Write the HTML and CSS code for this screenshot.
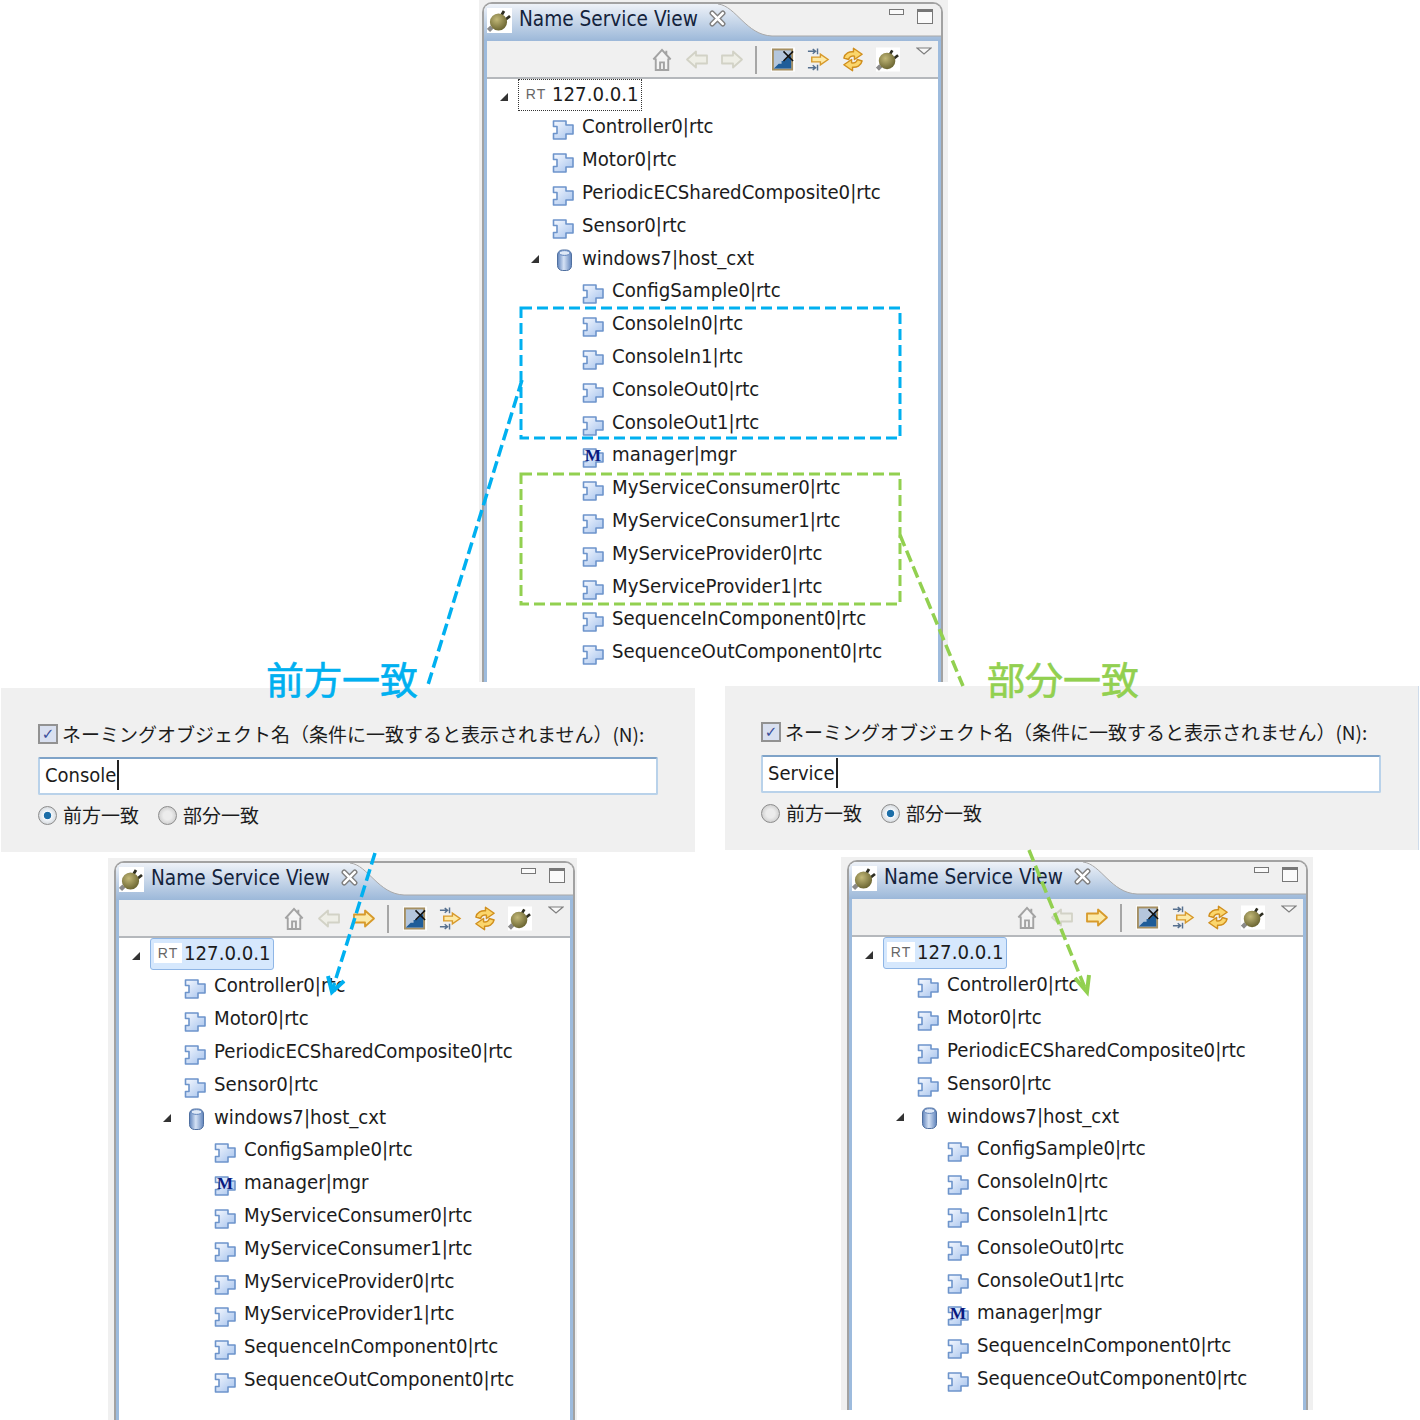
FILE: index.html
```html
<!DOCTYPE html>
<html lang="en">
  <head>
    <meta charset="UTF-8">
    <title>Name Service View</title>
    <link rel="stylesheet" href="styles.css">
  </head>
  <body>
    <!-- shared icons -->
    <svg class="defs" width="0" height="0">
      <defs>
        <linearGradient id="tabfill" x1="0" y1="0" x2="0" y2="1">
          <stop offset="0" stop-color="#eef2f8"/>
          <stop offset="1" stop-color="#9cb8d9"/>
        </linearGradient>
        <linearGradient id="puzzlefill" x1="0" y1="0" x2="1" y2="1">
          <stop offset="0" stop-color="#f6f9ff"/>
          <stop offset="1" stop-color="#a3c1ec"/>
        </linearGradient>
        <linearGradient id="dbfill" x1="0" y1="0" x2="1" y2="0">
          <stop offset="0" stop-color="#5f83bb"/>
          <stop offset=".45" stop-color="#d5e2f5"/>
          <stop offset="1" stop-color="#5f83bb"/>
        </linearGradient>
        <radialGradient id="plugfill" cx=".4" cy=".35" r=".75">
          <stop offset="0" stop-color="#c2b878"/>
          <stop offset="1" stop-color="#5f5a28"/>
        </radialGradient>
        <symbol id="puzzle" viewBox="0 0 22 21">
          <path d="M1.5 2H14V6H21V15H14V20H1.5V14.5H5V7.5H1.5Z" fill="url(#puzzlefill)" stroke="#6d94cb" stroke-width="1.6" stroke-linejoin="round"/>
        </symbol>
        <symbol id="db" viewBox="0 0 17 24">
          <rect x="1.5" y="2" width="14" height="20.5" rx="5" fill="url(#dbfill)" stroke="#4f6f9f"/>
          <ellipse cx="8.5" cy="5" rx="5.5" ry="2.4" fill="#dfe9f7" stroke="#5f83bb"/>
        </symbol>
        <symbol id="plug" viewBox="0 0 25 25">
          <rect width="25" height="25" fill="#fff"/>
          <path d="M5 19L1.5 22.5" stroke="#8a8a8a" stroke-width="4.5"/>
          <path d="M14 8L17 3M18 12L23 8" stroke="#2e2e22" stroke-width="2.8"/>
          <circle cx="11.5" cy="14" r="8.6" fill="url(#plugfill)"/>
        </symbol>
        <symbol id="home" viewBox="0 0 24 26">
          <path d="M3 13L12 3L21 13M5.5 12V24H18.5V12M10 24V16H14V24M16.5 4V8" fill="#f4f4f4" stroke="#a3a3a3" stroke-width="2"/>
        </symbol>
        <symbol id="back" viewBox="0 0 24 24">
          <path d="M2 12L11 4V8H22V16H11V20Z" fill="#eeeee6" stroke="#d2d2c6" stroke-width="1.8" stroke-linejoin="round"/>
        </symbol>
        <symbol id="fwd" viewBox="0 0 24 24">
          <path d="M22 12L13 4V8H2V16H13V20Z" fill="#eeeee6" stroke="#d2d2c6" stroke-width="1.8" stroke-linejoin="round"/>
        </symbol>
        <symbol id="fwdon" viewBox="0 0 24 24">
          <path d="M22 12L13 4V8H2V16H13V20Z" fill="#fbe9a8" stroke="#d79a2b" stroke-width="1.8" stroke-linejoin="round"/>
        </symbol>
        <symbol id="filter" viewBox="0 0 25 25">
          <rect width="25" height="25" fill="#fff"/>
          <rect x="2" y="2" width="20" height="21" fill="#b4c6dc" stroke="#a58f62" stroke-width="2"/>
          <path d="M3 22L8 17H11V14H14L20 8H21V22Z" fill="#1f5d99"/>
          <path d="M13 4L23 14M23 4L13 14" stroke="#111" stroke-width="1.6"/>
        </symbol>
        <symbol id="link" viewBox="0 0 25 25">
          <path d="M2 4H9M7 1.5L10 4L7 6.5M12 1V7M2 21H9M7 18.5L10 21L7 23.5M12 18V24" fill="none" stroke="#56708f" stroke-width="1.5"/>
          <path d="M6 10H15V7L23 12.5L15 18V15H6Z" fill="#fde9a5" stroke="#d89a2c" stroke-width="1.5"/>
        </symbol>
        <symbol id="sync" viewBox="0 0 25 25">
          <path id="synchalf" d="M3 11C4 6 9 4 13 4.5L13 0.8L22 7L14 12.5L14 9C11 8.5 8.5 10 8 12.5Z" fill="#fbd66c" stroke="#d08f1e" stroke-width="1.5" stroke-linejoin="round"/>
          <use href="#synchalf" transform="rotate(180 12.5 12.5)"/>
        </symbol>
        <symbol id="closex" viewBox="0 0 16 16">
          <path d="M3 3L13 13M13 3L3 13" stroke="#808080" stroke-width="5" stroke-linecap="round"/>
          <path d="M3 3L13 13M13 3L3 13" stroke="#fff" stroke-width="2.4" stroke-linecap="round"/>
        </symbol>
        <symbol id="menutri" viewBox="0 0 16 8">
          <path d="M1 1H15L8 7Z" fill="#f8f8f8" stroke="#7f7f7f" stroke-width="1.2"/>
        </symbol>
      </defs>
    </svg>

    <div class="view view-top">
      <div class="pane">
        <div class="tabbar">
          <svg class="tabshape" width="457" height="37"><path d="M0 37V0H234C252 2 262 31 288 32H457V37Z" fill="url(#tabfill)"/><path d="M234 0C252 2 262 31 288 32H457" fill="none" stroke="#a8a8a8"/></svg>
          <svg class="tabicon"><use href="#plug"/></svg>
          <span class="tabtitle">Name Service View</span>
          <svg class="tabclose"><use href="#closex"/></svg>
          <span class="winmin"></span>
          <span class="winmax"></span>
        </div>
        <div class="body">
          <div class="toolbar">
            <svg class="tool"><use href="#home"/></svg>
            <svg class="tool"><use href="#back"/></svg>
            <svg class="tool"><use href="#fwd"/></svg>
            <span class="sep"></span>
            <svg class="tool"><use href="#filter"/></svg>
            <svg class="tool"><use href="#link"/></svg>
            <svg class="tool"><use href="#sync"/></svg>
            <svg class="tool"><use href="#plug"/></svg>
            <svg class="menu"><use href="#menutri"/></svg>
          </div>
          <ul class="tree">
            <li class="row root"><i class="twisty"></i><span class="rootbox"><b class="rt">RT</b>127.0.0.1</span></li>
            <li class="row l1"><svg class="ico"><use href="#puzzle"/></svg>Controller0|rtc</li>
            <li class="row l1"><svg class="ico"><use href="#puzzle"/></svg>Motor0|rtc</li>
            <li class="row l1"><svg class="ico"><use href="#puzzle"/></svg>PeriodicECSharedComposite0|rtc</li>
            <li class="row l1"><svg class="ico"><use href="#puzzle"/></svg>Sensor0|rtc</li>
            <li class="row host"><i class="twisty"></i><svg class="dbico"><use href="#db"/></svg>windows7|host_cxt</li>
            <li class="row l2"><svg class="ico"><use href="#puzzle"/></svg>ConfigSample0|rtc</li>
            <li class="row l2"><svg class="ico"><use href="#puzzle"/></svg>ConsoleIn0|rtc</li>
            <li class="row l2"><svg class="ico"><use href="#puzzle"/></svg>ConsoleIn1|rtc</li>
            <li class="row l2"><svg class="ico"><use href="#puzzle"/></svg>ConsoleOut0|rtc</li>
            <li class="row l2"><svg class="ico"><use href="#puzzle"/></svg>ConsoleOut1|rtc</li>
            <li class="row l2"><span class="mgr"><svg class="ico"><use href="#puzzle"/></svg><em>M</em></span>manager|mgr</li>
            <li class="row l2"><svg class="ico"><use href="#puzzle"/></svg>MyServiceConsumer0|rtc</li>
            <li class="row l2"><svg class="ico"><use href="#puzzle"/></svg>MyServiceConsumer1|rtc</li>
            <li class="row l2"><svg class="ico"><use href="#puzzle"/></svg>MyServiceProvider0|rtc</li>
            <li class="row l2"><svg class="ico"><use href="#puzzle"/></svg>MyServiceProvider1|rtc</li>
            <li class="row l2"><svg class="ico"><use href="#puzzle"/></svg>SequenceInComponent0|rtc</li>
            <li class="row l2"><svg class="ico"><use href="#puzzle"/></svg>SequenceOutComponent0|rtc</li>
          </ul>
        </div>
      </div>
    </div>

    <div class="view view-left">
      <div class="pane">
        <div class="tabbar">
          <svg class="tabshape" width="457" height="37"><path d="M0 37V0H234C252 2 262 31 288 32H457V37Z" fill="url(#tabfill)"/><path d="M234 0C252 2 262 31 288 32H457" fill="none" stroke="#a8a8a8"/></svg>
          <svg class="tabicon"><use href="#plug"/></svg>
          <span class="tabtitle">Name Service View</span>
          <svg class="tabclose"><use href="#closex"/></svg>
          <span class="winmin"></span>
          <span class="winmax"></span>
        </div>
        <div class="body">
          <div class="toolbar">
            <svg class="tool"><use href="#home"/></svg>
            <svg class="tool"><use href="#back"/></svg>
            <svg class="tool"><use href="#fwdon"/></svg>
            <span class="sep"></span>
            <svg class="tool"><use href="#filter"/></svg>
            <svg class="tool"><use href="#link"/></svg>
            <svg class="tool"><use href="#sync"/></svg>
            <svg class="tool"><use href="#plug"/></svg>
            <svg class="menu"><use href="#menutri"/></svg>
          </div>
          <ul class="tree">
            <li class="row root"><i class="twisty"></i><span class="rootbox selected"><b class="rt">RT</b>127.0.0.1</span></li>
            <li class="row l1"><svg class="ico"><use href="#puzzle"/></svg>Controller0|rtc</li>
            <li class="row l1"><svg class="ico"><use href="#puzzle"/></svg>Motor0|rtc</li>
            <li class="row l1"><svg class="ico"><use href="#puzzle"/></svg>PeriodicECSharedComposite0|rtc</li>
            <li class="row l1"><svg class="ico"><use href="#puzzle"/></svg>Sensor0|rtc</li>
            <li class="row host"><i class="twisty"></i><svg class="dbico"><use href="#db"/></svg>windows7|host_cxt</li>
            <li class="row l2"><svg class="ico"><use href="#puzzle"/></svg>ConfigSample0|rtc</li>
            <li class="row l2"><span class="mgr"><svg class="ico"><use href="#puzzle"/></svg><em>M</em></span>manager|mgr</li>
            <li class="row l2"><svg class="ico"><use href="#puzzle"/></svg>MyServiceConsumer0|rtc</li>
            <li class="row l2"><svg class="ico"><use href="#puzzle"/></svg>MyServiceConsumer1|rtc</li>
            <li class="row l2"><svg class="ico"><use href="#puzzle"/></svg>MyServiceProvider0|rtc</li>
            <li class="row l2"><svg class="ico"><use href="#puzzle"/></svg>MyServiceProvider1|rtc</li>
            <li class="row l2"><svg class="ico"><use href="#puzzle"/></svg>SequenceInComponent0|rtc</li>
            <li class="row l2"><svg class="ico"><use href="#puzzle"/></svg>SequenceOutComponent0|rtc</li>
          </ul>
        </div>
      </div>
    </div>

    <div class="view view-right">
      <div class="pane">
        <div class="tabbar">
          <svg class="tabshape" width="457" height="37"><path d="M0 37V0H234C252 2 262 31 288 32H457V37Z" fill="url(#tabfill)"/><path d="M234 0C252 2 262 31 288 32H457" fill="none" stroke="#a8a8a8"/></svg>
          <svg class="tabicon"><use href="#plug"/></svg>
          <span class="tabtitle">Name Service View</span>
          <svg class="tabclose"><use href="#closex"/></svg>
          <span class="winmin"></span>
          <span class="winmax"></span>
        </div>
        <div class="body">
          <div class="toolbar">
            <svg class="tool"><use href="#home"/></svg>
            <svg class="tool"><use href="#back"/></svg>
            <svg class="tool"><use href="#fwdon"/></svg>
            <span class="sep"></span>
            <svg class="tool"><use href="#filter"/></svg>
            <svg class="tool"><use href="#link"/></svg>
            <svg class="tool"><use href="#sync"/></svg>
            <svg class="tool"><use href="#plug"/></svg>
            <svg class="menu"><use href="#menutri"/></svg>
          </div>
          <ul class="tree">
            <li class="row root"><i class="twisty"></i><span class="rootbox selected"><b class="rt">RT</b>127.0.0.1</span></li>
            <li class="row l1"><svg class="ico"><use href="#puzzle"/></svg>Controller0|rtc</li>
            <li class="row l1"><svg class="ico"><use href="#puzzle"/></svg>Motor0|rtc</li>
            <li class="row l1"><svg class="ico"><use href="#puzzle"/></svg>PeriodicECSharedComposite0|rtc</li>
            <li class="row l1"><svg class="ico"><use href="#puzzle"/></svg>Sensor0|rtc</li>
            <li class="row host"><i class="twisty"></i><svg class="dbico"><use href="#db"/></svg>windows7|host_cxt</li>
            <li class="row l2"><svg class="ico"><use href="#puzzle"/></svg>ConfigSample0|rtc</li>
            <li class="row l2"><svg class="ico"><use href="#puzzle"/></svg>ConsoleIn0|rtc</li>
            <li class="row l2"><svg class="ico"><use href="#puzzle"/></svg>ConsoleIn1|rtc</li>
            <li class="row l2"><svg class="ico"><use href="#puzzle"/></svg>ConsoleOut0|rtc</li>
            <li class="row l2"><svg class="ico"><use href="#puzzle"/></svg>ConsoleOut1|rtc</li>
            <li class="row l2"><span class="mgr"><svg class="ico"><use href="#puzzle"/></svg><em>M</em></span>manager|mgr</li>
            <li class="row l2"><svg class="ico"><use href="#puzzle"/></svg>SequenceInComponent0|rtc</li>
            <li class="row l2"><svg class="ico"><use href="#puzzle"/></svg>SequenceOutComponent0|rtc</li>
          </ul>
        </div>
      </div>
    </div>

    <div class="panel panel-left">
      <div class="check-line"><span class="checkbox">✓</span><span class="check-text">ネーミングオブジェクト名（条件に一致すると表示されません）(N):</span></div>
      <div class="field">Console<span class="caret"></span></div>
      <div class="radios">
        <span class="radio on"></span><span class="radio-text">前方一致</span>
        <span class="radio"></span><span class="radio-text">部分一致</span>
      </div>
    </div>

    <div class="panel panel-right">
      <div class="check-line"><span class="checkbox">✓</span><span class="check-text">ネーミングオブジェクト名（条件に一致すると表示されません）(N):</span></div>
      <div class="field">Service<span class="caret"></span></div>
      <div class="radios">
        <span class="radio"></span><span class="radio-text">前方一致</span>
        <span class="radio on"></span><span class="radio-text">部分一致</span>
      </div>
    </div>

    <svg class="marks" width="1420" height="1420">
      <rect class="blue dash" x="521" y="308" width="379" height="130"/>
      <rect class="green dash" x="521" y="474" width="379" height="130"/>
      <path class="blue line" d="M522 380L427 688"/>
      <path class="blue line" d="M375 853L333 988"/>
      <path class="blue head" d="M328 976L332 992L344 981"/>
      <path class="green line" d="M900 535L963 686"/>
      <path class="green line" d="M1029 850L1085 988"/>
      <path class="green head" d="M1075 978L1087 992L1089 975"/>
    </svg>

    <div class="caption caption-blue">前方一致</div>
    <div class="caption caption-green">部分一致</div>
  </body>
</html>
```

FILE: styles.css
```css
*{
    margin: 0;
    padding: 0;
    box-sizing: border-box;
}
body{
    position: relative;
    width: 1420px;
    height: 1420px;
    overflow: hidden;
    background: white;
    font-family: "DejaVu Sans", "Noto Sans", sans-serif;
    font-stretch: condensed;
    color: #1c1c1c;
}
.defs{
    position: absolute;
}

/* views sit freely on the picture */
.view{
    position: absolute;
    display: flex;
    background: #f0f0f0;
    padding-top: 2px;
}
.view-top{
    left: 479px;
    top: 0;
    width: 469px;
    height: 682px;
    padding-left: 3px;
}
.view-left{
    left: 108px;
    top: 858px;
    width: 469px;
    height: 562px;
    padding-left: 6px;
    padding-top: 3px;
}
.view-right{
    left: 841px;
    top: 857px;
    width: 472px;
    height: 553px;
    padding-left: 6px;
    padding-top: 3px;
}
.pane{
    width: 461px;
    height: 100%;
    display: flex;
    flex-direction: column;
    border: 2px solid #a2a2a2;
    border-bottom: none;
    border-radius: 10px 10px 0 0;
    overflow: hidden;
    background: white;
}
.tabbar{
    position: relative;
    flex: none;
    height: 37px;
    display: flex;
    align-items: flex-start;
    background: #f0f0f0;
}
.tabshape{
    position: absolute;
    left: 0;
    top: 0;
}
.tabicon{
    position: relative;
    width: 25px;
    height: 25px;
    margin: 4px 0 0 3px;
}
.tabtitle{
    position: relative;
    width: 178px;
    margin: 2px 0 0 7px;
    font-size: 20.6px;
    line-height: 26px;
    white-space: nowrap;
    color: #14233c;
}
.tabclose{
    position: relative;
    width: 17px;
    height: 17px;
    margin: 6px 0 0 12px;
}
.winmin{
    position: relative;
    margin: 5px 0 0 auto;
    width: 15px;
    height: 6px;
    border: 1px solid #777;
    background: #fafafa;
}
.winmax{
    position: relative;
    margin: 5px 8px 0 13px;
    width: 16px;
    height: 15px;
    border: 1px solid #777;
    border-top-width: 3px;
    background: #fafafa;
}
.body{
    flex: 1;
    min-height: 0;
    border-left: 3px solid #9dbbdd;
    border-right: 3px solid #9dbbdd;
    background: white;
}
.toolbar{
    height: 38px;
    display: flex;
    align-items: center;
    justify-content: flex-end;
    gap: 11px;
    padding: 1px 6px 0 0;
    background: #f0f0f0;
    border-bottom: 2px solid #b5b8bc;
}
.tool{
    width: 24px;
    height: 25px;
}
.sep{
    width: 2px;
    height: 28px;
    background: #a6a6a6;
    margin: 0 3px 0 0;
}
.menu{
    width: 16px;
    height: 8px;
    margin: 0 0 17px 5px;
}

/* tree */
.tree{
    list-style: none;
    font-size: 20.2px;
}
.row{
    height: 32.8px;
    padding-bottom: 2px;
    display: flex;
    align-items: center;
    white-space: nowrap;
}
.root{
    height: 32px;
    padding-bottom: 0;
    padding-left: 13px;
}
.host{
    padding-left: 44px;
}
.l1{
    padding-left: 65px;
}
.l2{
    padding-left: 95px;
}
.ico{
    flex: none;
    width: 22px;
    height: 21px;
    margin: 7px 8px 0 0;
}
.twisty{
    flex: none;
    width: 0;
    height: 0;
    margin: 3px 10px 0 0;
    border-left: 8px solid transparent;
    border-bottom: 8px solid #333;
}
.host .twisty{
    margin-right: 17px;
}
.dbico{
    flex: none;
    width: 17px;
    height: 24px;
    margin: 4px 9px 0 0;
}
.mgr{
    position: relative;
    display: flex;
    flex: none;
}
.mgr em{
    position: absolute;
    left: 3px;
    top: 6px;
    font: bold 17px/19px "Liberation Serif", serif;
    color: #0a1a80;
}
.rootbox{
    display: flex;
    align-items: center;
    width: 124px;
    height: 32px;
    padding: 0 0 2px 3px;
    border: 1px dotted #333;
}
.rootbox.selected{
    background: #d6e8fd;
    border: 1px solid #8fb6e6;
    border-radius: 3px;
}
.rt{
    width: 28px;
    margin-right: 2px;
    font: 14px/20px "Liberation Sans", sans-serif;
    letter-spacing: 1px;
    color: #666;
    text-align: center;
    background: white;
}

/* filter panels */
.panel{
    position: absolute;
    width: 694px;
    height: 164px;
    padding: 36px 0 0 37px;
    background: #f0f0f0;
    font-size: 19px;
    font-family: "Noto Sans CJK JP", sans-serif;
    font-stretch: normal;
}
.panel-left{
    left: 1px;
    top: 688px;
}
.panel-right{
    left: 725px;
    top: 686px;
    padding-left: 36px;
    border-right: 1px solid #cfdceb;
}
.check-line{
    display: flex;
    align-items: center;
    height: 20px;
    white-space: nowrap;
}
.check-text{
    margin-top: -2px;
}
.checkbox{
    width: 20px;
    height: 20px;
    margin-right: 4px;
    border: 2px solid #929292;
    background: #d9e0f0;
    font: bold 15px/16px "DejaVu Sans", sans-serif;
    color: #3b4f9a;
    text-align: center;
}
.field{
    display: flex;
    align-items: center;
    width: 620px;
    height: 38px;
    margin-top: 13px;
    padding: 0 0 2px 5px;
    background: white;
    border: 2px solid #b9d2ea;
    border-top-color: #7fa3c8;
    border-radius: 2px;
    font: 20px "DejaVu Sans", "Noto Sans", sans-serif;
    font-stretch: condensed;
}
.caret{
    width: 2px;
    height: 30px;
    margin-left: 1px;
    background: #222;
}
.radios{
    display: flex;
    align-items: center;
    height: 24px;
    margin-top: 8px;
}
.radio{
    width: 19px;
    height: 19px;
    margin-right: 6px;
    border: 1px solid #8c8c8c;
    border-radius: 50%;
    background: radial-gradient(circle, #ececec 35%, #bdbdbd 100%);
}
.radio.on{
    background: radial-gradient(circle, #1c6ea8 0, #1c6ea8 28%, #f4f8fc 34%, #c2c6ca 100%);
}
.radio-text{
    margin: -2px 19px 0 0;
}

/* annotation overlay */
.marks{
    position: absolute;
    left: 0;
    top: 0;
    fill: none;
    pointer-events: none;
}
.dash{
    stroke-width: 3;
    stroke-dasharray: 11 5;
}
.line{
    stroke-width: 3.5;
    stroke-dasharray: 12 5;
}
.head{
    stroke-width: 4;
}
.blue{
    stroke: #00b0f0;
}
.green{
    stroke: #92d050;
}
.caption{
    position: absolute;
    font: 400 38px/44px "Noto Sans CJK JP", sans-serif;
    -webkit-text-stroke: 0.6px currentColor;
    white-space: nowrap;
}
.caption-blue{
    left: 266px;
    top: 656px;
    color: #00b0f0;
}
.caption-green{
    left: 987px;
    top: 656px;
    color: #92d050;
}
```
